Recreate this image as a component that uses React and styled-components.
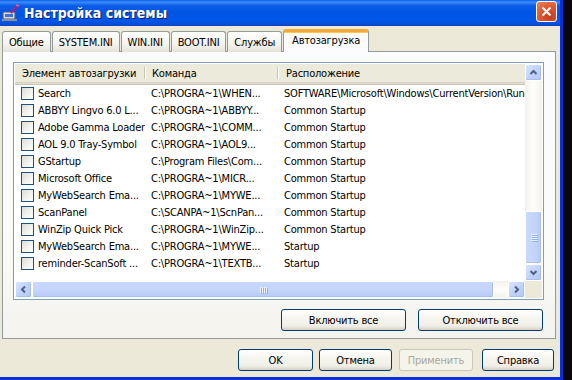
import React from 'react';
import styled, { createGlobalStyle, css } from 'styled-components';

const GlobalStyle = createGlobalStyle`
  html, body {
    margin: 0;
    padding: 0;
    background: #07070d;
    width: 572px;
    height: 380px;
    overflow: hidden;
  }
  * { box-sizing: border-box; }
`;

const FONT = `"DejaVu Sans Condensed", "Liberation Sans", sans-serif`;

const Window = styled.div`
  width: 563px;
  height: 380px;
  display: flex;
  flex-direction: column;
  background: #ece9d8;
  border-right: 3px solid #0831d9;
  border-bottom: 3px solid #0831d9;
  font-family: ${FONT};
  font-size: 11px;
  letter-spacing: -0.2px;
  color: #000;
`;

const TitleBar = styled.div`
  height: 26px;
  flex: none;
  display: flex;
  align-items: center;
  padding: 0 3px 0 2px;
  gap: 4px;
  background: linear-gradient(
    180deg,
    #0a5ff0 0%,
    #3c8cf6 8%,
    #0b5ce8 22%,
    #0054e3 50%,
    #0157ea 80%,
    #0a4fd6 92%,
    #0843c3 100%
  );
`;

const Title = styled.div`
  flex: 1;
  color: #fff;
  font-family: "DejaVu Sans Condensed", "Liberation Sans", sans-serif;
  font-weight: bold;
  font-size: 14px;
  letter-spacing: 0;
  text-shadow: 1px 1px 0 #0a1f6c;
`;

const CloseButton = styled.div`
  width: 21px;
  height: 21px;
  margin-top: -3px;
  border: 1px solid #fff;
  border-radius: 3px;
  background: radial-gradient(circle at 70% 80%, #c13e1e 0%, #df5a33 55%, #ec8463 100%);
  display: flex;
  align-items: center;
  justify-content: center;
`;

const Body = styled.div`
  flex: 1;
  display: flex;
  flex-direction: column;
  padding: 3px 4px 0 2px;
`;

const TabRow = styled.div`
  display: flex;
  align-items: flex-end;
  height: 23px;
  position: relative;
  z-index: 1;
  margin-bottom: -1px;
`;

const Tab = styled.div`
  height: 21px;
  padding: 0 6px;
  margin-right: 1px;
  display: flex;
  align-items: center;
  border: 1px solid #919b9c;
  border-bottom: none;
  border-radius: 3px 3px 0 0;
  background: linear-gradient(180deg, #fffffe 0%, #f4f3ee 60%, #e5e3d8 100%);
  white-space: nowrap;
  ${p =>
    p.$active &&
    css`
      height: 23px;
      padding: 0 8px 3px 8px;
      background: #fcfcfe;
      border-top: 3px solid #f6a935;
      box-shadow: inset 0 1px 0 #ffc850;
    `}
`;

const Panel = styled.div`
  height: 288px;
  border: 1px solid #919b9c;
  background: linear-gradient(180deg, #fcfcfe 0%, #fafaf7 70%, #f4f3ee 100%);
  padding: 10px 11px 7px 10px;
  display: flex;
  flex-direction: column;
`;

const ListView = styled.div`
  height: 238px;
  border: 1px solid #7f9db9;
  background: #fff;
  padding: 1px;
  display: grid;
  grid-template-columns: 1fr 17px;
  grid-template-rows: 1fr 17px;
`;

const Content = styled.div`
  overflow: hidden;
`;

const HeaderRow = styled.div`
  display: flex;
  height: 19px;
  background: #ebeadb;
  border-bottom: 1px solid #d6d2c2;
  box-shadow: 0 1px 0 #e2decd, 0 2px 0 #cbc7b8;
  margin-bottom: 2px;
`;

const HeaderCell = styled.div`
  width: ${p => p.$w}px;
  flex: none;
  padding-left: ${p => p.$pl}px;
  display: flex;
  align-items: center;
  white-space: nowrap;
  position: relative;
  &::after {
    content: '';
    position: absolute;
    right: 0;
    top: 3px;
    bottom: 3px;
    width: 1px;
    background: #c7c5b2;
    box-shadow: 1px 0 0 #fff;
  }
`;

const Row = styled.div`
  display: flex;
  height: 17px;
  align-items: center;
`;

const Cell = styled.div`
  width: ${p => p.$w}px;
  flex: none;
  padding-left: ${p => p.$pl}px;
  display: flex;
  align-items: center;
  gap: 4px;
  white-space: nowrap;
  overflow: hidden;
`;

const CheckBox = styled.span`
  width: 13px;
  height: 13px;
  flex: none;
  border: 1px solid #1c5180;
  background: linear-gradient(135deg, #dcdcd7 0%, #f4f4f0 60%, #fff 100%);
`;

const VScroll = styled.div`
  display: flex;
  flex-direction: column;
  background: linear-gradient(90deg, #f3f1ec 0%, #fefefb 50%, #f3f1ec 100%);
`;

const HScroll = styled.div`
  display: flex;
  background: linear-gradient(180deg, #f3f1ec 0%, #fefefb 50%, #f3f1ec 100%);
`;

const Corner = styled.div`
  background: #ece9d8;
`;

const ScrollButton = styled.div`
  width: 17px;
  height: 17px;
  flex: none;
  border: 1px solid #fff;
  border-radius: 2px;
  background: linear-gradient(135deg, #d8e5fd 0%, #c1d3fb 50%, #b4c8f6 100%);
  box-shadow: inset -1px -1px 0 #a9bfe9;
  display: flex;
  align-items: center;
  justify-content: center;
`;

const Thumb = styled.div`
  border: 1px solid #fff;
  border-radius: 2px;
  background: ${p =>
    p.$vertical
      ? 'linear-gradient(90deg, #c9d8fc 0%, #c5d6fc 50%, #b8cbf6 100%)'
      : 'linear-gradient(180deg, #c9d8fc 0%, #c5d6fc 50%, #b8cbf6 100%)'};
  box-shadow: inset -1px -1px 0 #a9bfe9;
  display: flex;
  align-items: center;
  justify-content: center;
  ${p =>
    p.$vertical
      ? css`
          height: 53px;
        `
      : css`
          width: 462px;
        `}
`;

const Track = styled.div`
  flex: 1;
`;

const Grip = styled.div`
  display: flex;
  flex-direction: ${p => (p.$vertical ? 'column' : 'row')};
  gap: 1px;
  & > span {
    background: #eef4fe;
    box-shadow: 1px 1px 0 #8cb0f8;
    width: ${p => (p.$vertical ? '6px' : '1px')};
    height: ${p => (p.$vertical ? '1px' : '6px')};
  }
`;

const ButtonRow = styled.div`
  display: flex;
  justify-content: flex-end;
  gap: 12px;
  margin-top: 9px;
  padding-right: 1px;
`;

const Button = styled.div`
  width: ${p => p.$w}px;
  height: 22px;
  border: 1px solid ${p => (p.$disabled ? '#c9c7ba' : '#003c74')};
  border-radius: 3px;
  background: ${p =>
    p.$disabled
      ? '#f5f4ea'
      : 'linear-gradient(180deg, #ffffff 0%, #f6f5f0 40%, #efeee7 80%, #d6d0c5 100%)'};
  color: ${p => (p.$disabled ? '#aca899' : '#000')};
  display: flex;
  align-items: center;
  justify-content: center;
  white-space: nowrap;
`;

const Footer = styled.div`
  display: flex;
  justify-content: flex-end;
  gap: 6px;
  margin-top: 10px;
  padding-right: 2px;
  & > div:nth-child(3) { margin-left: 1px; margin-right: 3px; }
`;

const COLS = [130, 133, 300];

const ITEMS = [
  ['Search', 'C:\\PROGRA~1\\WHEN...', 'SOFTWARE\\Microsoft\\Windows\\CurrentVersion\\Run'],
  ['ABBYY Lingvo 6.0 L...', 'C:\\PROGRA~1\\ABBYY...', 'Common Startup'],
  ['Adobe Gamma Loader', 'C:\\PROGRA~1\\COMM...', 'Common Startup'],
  ['AOL 9.0 Tray-Symbol', 'C:\\PROGRA~1\\AOL9...', 'Common Startup'],
  ['GStartup', 'C:\\Program Files\\Com...', 'Common Startup'],
  ['Microsoft Office', 'C:\\PROGRA~1\\MICR...', 'Common Startup'],
  ['MyWebSearch Ema...', 'C:\\PROGRA~1\\MYWE...', 'Common Startup'],
  ['ScanPanel', 'C:\\SCANPA~1\\ScnPan...', 'Common Startup'],
  ['WinZip Quick Pick', 'C:\\PROGRA~1\\WinZip...', 'Common Startup'],
  ['MyWebSearch Ema...', 'C:\\PROGRA~1\\MYWE...', 'Startup'],
  ['reminder-ScanSoft ...', 'C:\\PROGRA~1\\TEXTB...', 'Startup'],
];

const TABS = ['Общие', 'SYSTEM.INI', 'WIN.INI', 'BOOT.INI', 'Службы', 'Автозагрузка'];

function Arrow({ dir }) {
  const paths = {
    up: 'M1.5 6 L4.5 3 L7.5 6',
    down: 'M1.5 3 L4.5 6 L7.5 3',
    left: 'M6 1.5 L3 4.5 L6 7.5',
    right: 'M3 1.5 L6 4.5 L3 7.5',
  };
  return (
    <svg width="9" height="9" viewBox="0 0 9 9">
      <path d={paths[dir]} fill="none" stroke="#4d6185" strokeWidth="2" />
    </svg>
  );
}

function GripLines({ vertical }) {
  return (
    <Grip $vertical={vertical}>
      <span />
      <span />
      <span />
      <span />
    </Grip>
  );
}

function AppIcon() {
  return (
    <svg width="18" height="18" viewBox="0 0 18 18">
      <rect x="1" y="8" width="12" height="7" rx="1" fill="#d8d8e0" stroke="#55586a" />
      <rect x="3" y="10" width="8" height="3" fill="#3f6fd8" />
      <rect x="0" y="15" width="15" height="2" fill="#8b8ea0" />
      <path d="M9 9 L16 1" stroke="#b0207a" strokeWidth="2" />
      <path d="M14 1 L17 2" stroke="#e060b0" strokeWidth="1.5" />
    </svg>
  );
}

export default function App() {
  return (
    <>
      <GlobalStyle />
      <Window>
        <TitleBar>
          <AppIcon />
          <Title>Настройка системы</Title>
          <CloseButton>
            <svg width="11" height="11" viewBox="0 0 11 11">
              <path d="M1.5 1.5 L9.5 9.5 M9.5 1.5 L1.5 9.5" stroke="#fff" strokeWidth="2" />
            </svg>
          </CloseButton>
        </TitleBar>
        <Body>
          <TabRow>
            {TABS.map((t, i) => (
              <Tab key={t} $active={i === TABS.length - 1}>
                {t}
              </Tab>
            ))}
          </TabRow>
          <Panel>
            <ListView>
              <Content>
                <HeaderRow>
                  <HeaderCell $w={COLS[0]} $pl={7}>Элемент автозагрузки</HeaderCell>
                  <HeaderCell $w={COLS[1]} $pl={7}>Команда</HeaderCell>
                  <HeaderCell $w={COLS[2]} $pl={8}>Расположение</HeaderCell>
                </HeaderRow>
                {ITEMS.map((item, i) => (
                  <Row key={i}>
                    <Cell $w={COLS[0]} $pl={6}>
                      <CheckBox />
                      {item[0]}
                    </Cell>
                    <Cell $w={COLS[1]} $pl={6}>{item[1]}</Cell>
                    <Cell $w={COLS[2]} $pl={6}>{item[2]}</Cell>
                  </Row>
                ))}
              </Content>
              <VScroll>
                <ScrollButton>
                  <Arrow dir="up" />
                </ScrollButton>
                <Track />
                <Thumb $vertical>
                  <GripLines vertical />
                </Thumb>
                <ScrollButton>
                  <Arrow dir="down" />
                </ScrollButton>
              </VScroll>
              <HScroll>
                <ScrollButton>
                  <Arrow dir="left" />
                </ScrollButton>
                <Thumb>
                  <GripLines />
                </Thumb>
                <Track />
                <ScrollButton>
                  <Arrow dir="right" />
                </ScrollButton>
              </HScroll>
              <Corner />
            </ListView>
            <ButtonRow>
              <Button $w={125}>Включить все</Button>
              <Button $w={125}>Отключить все</Button>
            </ButtonRow>
          </Panel>
          <Footer>
            <Button $w={75}>OK</Button>
            <Button $w={73}>Отмена</Button>
            <Button $w={74} $disabled>Применить</Button>
            <Button $w={72}>Справка</Button>
          </Footer>
        </Body>
      </Window>
    </>
  );
}
